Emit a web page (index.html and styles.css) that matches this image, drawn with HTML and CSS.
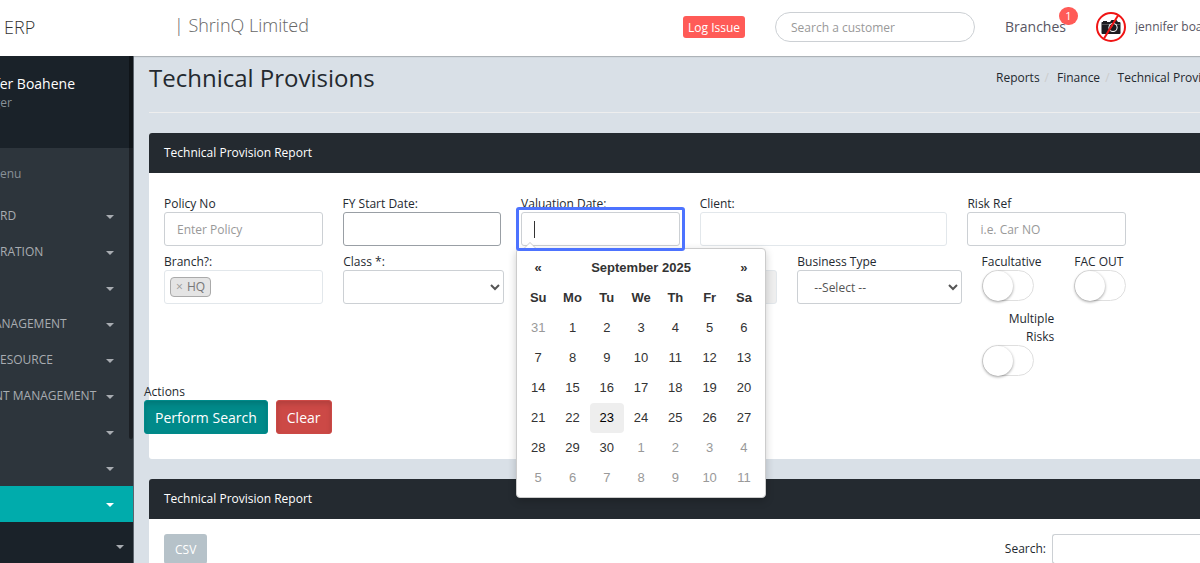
FILE: index.html
```
<!DOCTYPE html>
<html lang="en">
<head>
    <meta charset="UTF-8">
    <meta name="viewport" content="width=device-width, initial-scale=1.0">
    <link rel="stylesheet" href="styles.css">
    <title>Technical Provisions</title>
</head>
<body>

    <header class="navbar">
        <a href="#" class="brand">ERP</a>
        <div class="company">| ShrinQ Limited</div>
        <div class="navbar-right">
            <button type="button" class="log-issue">Log Issue</button>
            <input type="text" class="customer-search" placeholder="Search a customer" aria-label="Search a customer">
            <a href="#" class="branches">Branches<span class="badge">1</span></a>
            <a href="#" class="user-menu">
                <svg class="avatar" width="30" height="30" viewBox="0 0 30 30">
                    <circle cx="15" cy="15" r="14" fill="#fff"/>
                    <path d="M6 10h1V9h4v1h3l1.500-2h5L22 10h1.500q1 0 1 1v10q0 1-1 1h-17q-1 0-1-1V11q0-1 .5-1z" fill="#1c1c20"/>
                    <path d="M6 12.500h18" stroke="#777" stroke-width=".6"/>
                    <circle cx="17" cy="15.500" r="4.600" fill="#fff"/>
                    <circle cx="17" cy="15.500" r="3.600" fill="#1c1c20"/>
                    <path d="M15 15.500a2 2 0 0 1 2-2" fill="none" stroke="#fff"/>
                    <path d="M22 3.500L8 26.500" stroke="#f01414" stroke-width="2"/>
                    <circle cx="15" cy="15" r="14" fill="none" stroke="#f01414" stroke-width="2"/>
                </svg>
                <span class="user-name">jennifer boahene</span>
            </a>
        </div>
    </header>

    <div class="wrapper">
        <nav class="sidebar">
            <div class="profile">
                <div class="profile-name">fer Boahene</div>
                <div class="profile-role">ger</div>
            </div>
            <div class="menu-title">enu</div>
            <ul class="menu">
                <li><a href="#">RD<i class="caret"></i></a></li>
                <li><a href="#">RATION<i class="caret"></i></a></li>
                <li><a href="#" aria-label="Menu 3"><i class="caret"></i></a></li>
                <li><a href="#" class="cut">ANAGEMENT<i class="caret"></i></a></li>
                <li><a href="#">ESOURCE<i class="caret"></i></a></li>
                <li><a href="#" class="cut">NT MANAGEMENT<i class="caret"></i></a></li>
                <li><a href="#" aria-label="Menu 7"><i class="caret"></i></a></li>
                <li><a href="#" aria-label="Menu 8"><i class="caret"></i></a></li>
                <li class="active"><a href="#" aria-label="Menu 9"><i class="caret"></i></a></li>
            </ul>
            <div class="submenu"><a href="#" aria-label="Submenu"><i class="caret"></i></a></div>
            <div class="rail"></div>
        </nav>

        <main class="content">
            <div class="page-header">
                <h1>Technical Provisions</h1>
                <ol class="breadcrumb">
                    <li><a href="#">Reports</a></li>
                    <li><a href="#">Finance</a></li>
                    <li><a href="#">Technical Provisions</a></li>
                </ol>
            </div>

            <section class="panel">
                <h2 class="panel-heading">Technical Provision Report</h2>
                <form class="panel-body">
                    <div class="row row-top">
                        <div class="field">
                            <label for="policy">Policy No</label>
                            <input type="text" id="policy" class="control" placeholder="Enter Policy">
                        </div>
                        <div class="field">
                            <label for="fy-start">FY Start Date:</label>
                            <input type="text" id="fy-start" class="control control-dark">
                        </div>
                        <div class="field">
                            <label for="valuation">Valuation Date:</label>
                            <div class="date-box">
                                <input type="text" id="valuation" class="control">
                                <div class="datepicker">
                                    <table>
                                        <thead>
                                            <tr><th>«</th><th colspan="5">September 2025</th><th>»</th></tr>
                                            <tr><th>Su</th><th>Mo</th><th>Tu</th><th>We</th><th>Th</th><th>Fr</th><th>Sa</th></tr>
                                        </thead>
                                        <tbody>
                                            <tr><td class="other">31</td><td>1</td><td>2</td><td>3</td><td>4</td><td>5</td><td>6</td></tr>
                                            <tr><td>7</td><td>8</td><td>9</td><td>10</td><td>11</td><td>12</td><td>13</td></tr>
                                            <tr><td>14</td><td>15</td><td>16</td><td>17</td><td>18</td><td>19</td><td>20</td></tr>
                                            <tr><td>21</td><td>22</td><td class="today">23</td><td>24</td><td>25</td><td>26</td><td>27</td></tr>
                                            <tr><td>28</td><td>29</td><td>30</td><td class="other">1</td><td class="other">2</td><td class="other">3</td><td class="other">4</td></tr>
                                            <tr><td class="other">5</td><td class="other">6</td><td class="other">7</td><td class="other">8</td><td class="other">9</td><td class="other">10</td><td class="other">11</td></tr>
                                        </tbody>
                                    </table>
                                </div>
                            </div>
                        </div>
                        <div class="field field-wide">
                            <label for="client">Client:</label>
                            <input type="text" id="client" class="control control-light">
                        </div>
                        <div class="field">
                            <label for="risk">Risk Ref</label>
                            <input type="text" id="risk" class="control" placeholder="i.e. Car NO">
                        </div>
                    </div>

                    <div class="row row-bottom">
                        <div class="field">
                            <label for="branch">Branch?:</label>
                            <div class="control control-light tags">
                                <button type="button" id="branch" class="tag"><span>×</span> HQ</button>
                            </div>
                        </div>
                        <div class="field">
                            <label for="class">Class *:</label>
                            <select id="class" class="control"><option></option></select>
                        </div>
                        <div class="field field-end">
                            <input type="text" class="control" aria-label="Sub class" disabled>
                        </div>
                        <div class="field">
                            <label for="business">Business Type</label>
                            <select id="business" class="control"><option>--Select --</option></select>
                        </div>
                        <div class="field">
                            <label for="facultative">Facultative</label>
                            <input type="checkbox" id="facultative" class="switch">
                            <label for="multiple" class="label-right">Multiple Risks</label>
                            <input type="checkbox" id="multiple" class="switch">
                        </div>
                        <div class="field">
                            <label for="fac-out">FAC OUT</label>
                            <input type="checkbox" id="fac-out" class="switch">
                        </div>
                    </div>

                    <div class="actions">
                        <div class="actions-title">Actions</div>
                        <div class="actions-buttons">
                            <button type="button" class="btn btn-search">Perform Search</button>
                            <button type="button" class="btn btn-clear">Clear</button>
                        </div>
                    </div>
                </form>
            </section>

            <section class="panel">
                <h2 class="panel-heading">Technical Provision Report</h2>
                <div class="table-tools">
                    <button type="button" class="btn-csv">CSV</button>
                    <div class="table-search">
                        <label for="search">Search:</label>
                        <input type="search" id="search">
                    </div>
                </div>
            </section>
        </main>
    </div>

</body>
</html>
```

FILE: styles.css
```
* {
    box-sizing: border-box;
}
body {
    margin: 0;
    height: 100vh;
    overflow: hidden;
    display: flex;
    flex-direction: column;
    font-family: "Open Sans", sans-serif;
    font-size: 12px;
    line-height: 18px;
    color: #24292f;
    background-color: #d9e0e7;
}
a {
    color: inherit;
    text-decoration: none;
}
input, select, button {
    font-family: inherit;
    font-size: 12px;
}

/* top bar */
.navbar {
    display: flex;
    align-items: center;
    height: 56px;
    flex: none;
    background-color: #fff;
    box-shadow: 0 1px 1px rgba(0, 0, 0, 0.2);
    position: relative;
    white-space: nowrap;
}
.brand {
    width: 174px;
    padding: 0 0 2px 4px;
    font-size: 18px;
    font-weight: 300;
    color: #333;
}
.company {
    flex: 1;
    padding-bottom: 6px;
    font-size: 18px;
    font-weight: 300;
    color: #666;
}
.navbar-right {
    display: flex;
    align-items: center;
    padding-bottom: 2px;
}
.log-issue {
    height: 22px;
    margin-right: 30px;
    padding: 0 5px;
    border: 0;
    border-radius: 3px;
    background-color: #ff5b57;
    color: #fff;
}
.customer-search {
    width: 200px;
    height: 30px;
    margin-right: 30px;
    padding: 0 15px;
    border: 1px solid #ccd0d4;
    border-radius: 15px;
}
.branches {
    position: relative;
    margin-right: 30px;
    font-size: 14px;
    color: #585663;
}
.badge {
    position: absolute;
    top: -11px;
    right: -12px;
    width: 19px;
    height: 18px;
    border-radius: 9px;
    background-color: #ff5b57;
    color: #fff;
    font-size: 11px;
    text-align: center;
}
.user-menu {
    display: flex;
    align-items: center;
    gap: 9px;
    color: #585663;
}
.user-name {
    width: 65px;
    overflow: hidden;
}

/* sidebar */
.wrapper {
    display: flex;
    flex: 1;
    min-height: 0;
}
.sidebar {
    position: relative;
    width: 134px;
    flex: none;
    overflow: hidden;
    background-color: #2d353c;
    border-right: 1px solid #5d656d;
    color: #a8acb1;
}
.profile {
    height: 92px;
    padding-top: 18px;
    background-color: #1a2229;
}
.profile-name {
    display: flex;
    justify-content: flex-end;
    width: 75px;
    line-height: 20px;
    font-size: 14px;
    color: #fff;
    white-space: nowrap;
}
.profile-role {
    display: flex;
    justify-content: flex-end;
    width: 12px;
    color: #889097;
}
.menu-title {
    height: 50px;
    padding-top: 17px;
    color: #889097;
}
.menu {
    margin: 0;
    padding: 0;
    list-style: none;
}
.menu a, .submenu a {
    display: flex;
    align-items: center;
    justify-content: space-between;
    height: 36px;
    padding-right: 19px;
    white-space: nowrap;
}
.menu .cut {
    margin-left: -6px;
}
.caret {
    margin: 2px 0 0 auto;
    border: 4px solid transparent;
    border-top-color: currentColor;
    border-bottom: 0;
}
.menu .active {
    background-color: #00acac;
    color: #fff;
}
.submenu {
    height: 100px;
    background-color: #1a2229;
}
.submenu a {
    height: 48px;
    padding-right: 9px;
}
.rail {
    position: absolute;
    top: 0;
    right: 0;
    width: 4px;
    height: 383px;
    border-radius: 0 0 4px 4px;
    background-color: rgba(0, 0, 0, 0.4);
}

/* page */
.content {
    flex: 1;
    min-width: 0;
    overflow: hidden;
    padding-left: 15px;
}
.page-header {
    display: flex;
    justify-content: space-between;
    height: 57px;
    margin-bottom: 20px;
    padding-top: 8px;
    border-bottom: 1px solid #eee;
}
.page-header h1 {
    margin: 0;
    font-size: 24px;
    line-height: 28px;
    font-weight: 400;
}
.breadcrumb {
    display: flex;
    width: 204px;
    margin: 0;
    padding: 5px 0 0;
    list-style: none;
    white-space: nowrap;
    overflow: hidden;
}
.breadcrumb li + li::before {
    content: "/";
    padding: 0 8px 0 5px;
    color: #ccc;
}
.panel {
    margin-bottom: 20px;
    background-color: #fff;
    border-radius: 3px 0 0 3px;
}
.panel-heading {
    margin: 0;
    padding: 11px 15px;
    border-radius: 3px 0 0 0;
    background-color: #242a30;
    color: #fff;
    font-size: 12px;
    line-height: 18px;
    font-weight: 400;
}
.panel-body {
    padding: 21px 74px 25px 15px;
}
.row {
    display: grid;
    column-gap: 20px;
}
.row-top {
    grid-template-columns: repeat(11, 1fr);
    margin-bottom: 6px;
}
.row-top .field {
    grid-column: span 2;
}
.row-top .field-wide {
    grid-column: span 3;
}
.row-bottom {
    grid-template-columns: 160fr 161fr 255fr 165fr 73fr 52fr;
}
.field {
    min-width: 0;
}
.field label {
    display: block;
    padding-top: 1px;
    margin-bottom: -1px;
    white-space: nowrap;
}
.field-end {
    padding-top: 18px;
}
.control {
    display: block;
    width: 100%;
    height: 34px;
    padding: 6px 12px;
    border: 1px solid #ccd0d4;
    border-radius: 3px;
    background-color: #fff;
    color: #555;
}
.control-dark {
    border-color: #999fa5;
}
.control-light {
    border-color: #e2e7eb;
}
.control:disabled {
    background-color: #eee;
    border-color: #e2e7eb;
}
select.control {
    padding: 6px 4px 6px 12px;
}
::placeholder {
    color: #999;
}
.tags {
    padding: 6px 5px;
}
.tag {
    display: block;
    height: 20px;
    padding: 0 5px;
    border: 1px solid #aaa;
    border-radius: 4px;
    background-color: #e4e4e4;
    color: #777;
    line-height: 18px;
}
.tag span {
    margin-right: 1px;
    color: #999;
}
.switch {
    appearance: none;
    display: block;
    position: relative;
    width: 52px;
    height: 31px;
    margin: 0 0 8px;
    border: 1px solid #dfdfdf;
    border-radius: 16px;
    background-color: #fff;
}
.switch::before {
    content: "";
    display: block;
    width: 30px;
    height: 30px;
    border-radius: 50%;
    background-color: #fff;
    box-shadow: 0 1px 3px rgba(0, 0, 0, 0.4);
}
.field .label-right {
    text-align: right;
    white-space: normal;
}

/* calendar */
.date-box {
    position: relative;
}
.date-box::before {
    content: "";
    position: absolute;
    z-index: 2;
    top: 9px;
    left: 13px;
    width: 1px;
    height: 17px;
    background-color: #333;
}
.date-box::after {
    content: "";
    position: absolute;
    z-index: 3;
    inset: -5px;
    border: 3px solid #4d73ff;
    border-radius: 3px;
    pointer-events: none;
}
.datepicker {
    position: absolute;
    z-index: 2;
    top: 36px;
    left: -5px;
    width: 250px;
    padding: 4px;
    border: 1px solid #ccc;
    border-radius: 4px;
    background-color: #fff;
    box-shadow: 0 3px 8px rgba(0, 0, 0, 0.2);
}
.datepicker::before {
    content: "";
    position: absolute;
    top: -6px;
    left: 7px;
    border: 6px solid transparent;
    border-top: 0;
    border-bottom-color: #fff;
    filter: drop-shadow(0 -1px 0 #ccc);
}
.datepicker table {
    width: 100%;
    border-collapse: collapse;
    table-layout: fixed;
    font-family: "Liberation Sans", Arial, sans-serif;
    font-size: 13px;
    color: #333;
}
.datepicker th, .datepicker td {
    height: 30px;
    padding: 0;
    text-align: center;
}
.datepicker .other {
    color: #999;
}
.datepicker .today {
    border-radius: 4px;
    background-color: #eee;
    color: #000;
}

/* buttons */
.actions {
    margin-left: -20px;
}
.actions-title {
    line-height: 16px;
}
.actions-buttons {
    display: flex;
    gap: 8px;
}
.btn {
    height: 34px;
    padding: 0 10px;
    border: 1px solid #008a8a;
    border-radius: 3px;
    background-color: #008a8a;
    box-shadow: inset 0 3px 5px rgba(0, 0, 0, 0.125);
    color: #fff;
    font-size: 14px;
}
.btn-clear {
    border-color: #cc4946;
    background-color: #cc4946;
}
.table-tools {
    display: flex;
    justify-content: space-between;
    padding: 15px 0 15px 15px;
}
.btn-csv {
    height: 30px;
    padding: 0 11px;
    border: 0;
    border-radius: 3px;
    background-color: #b6c2c9;
    color: #fff;
}
.table-search {
    display: flex;
    align-items: center;
    gap: 6px;
}
.table-search input {
    width: 148px;
    height: 30px;
    border: 1px solid #ccd0d4;
    border-right: 0;
    border-radius: 3px 0 0 3px;
}
```
